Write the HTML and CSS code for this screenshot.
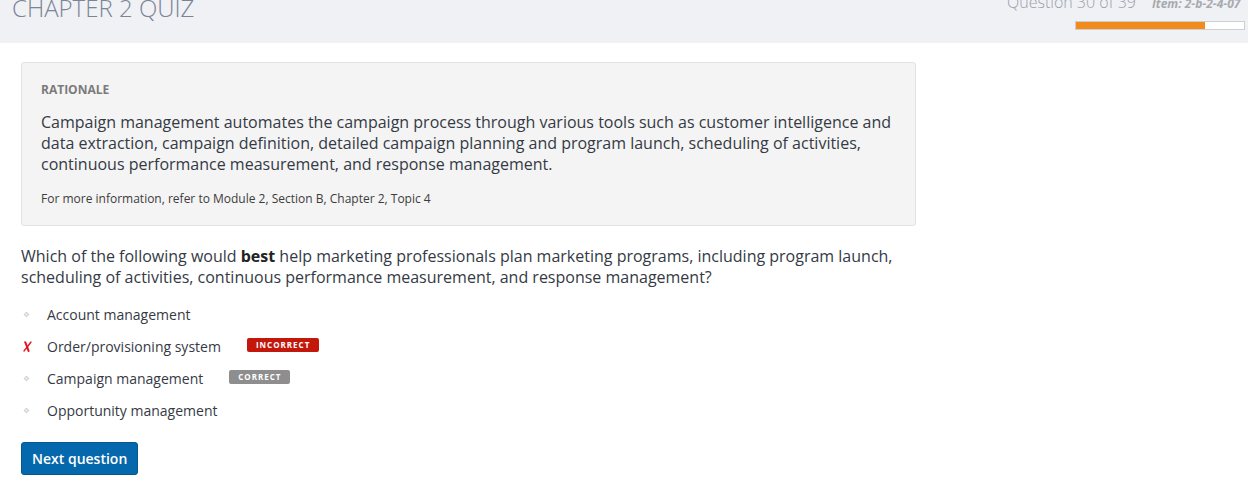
FILE: index.html
```html
<!DOCTYPE html>
<html lang="en">
<head>
<meta charset="utf-8">
<title>Chapter 2 Quiz</title>
<link rel="stylesheet" href="styles.css">
</head>
<body>
<header class="topbar">
  <h1 class="title">CHAPTER 2 QUIZ</h1>
  <div class="status">
    <div class="status-row">
      <span class="counter">Question 30 of 39</span>
      <span class="item-id">Item: 2-b-2-4-07</span>
    </div>
    <div class="progress"><div class="progress-fill" style="width: 76.9%"></div></div>
  </div>
</header>
<main class="content">
  <section class="rationale">
    <h2 class="rationale-label">RATIONALE</h2>
    <p class="rationale-text">Campaign management automates the campaign process through various tools such as customer intelligence and data extraction, campaign definition, detailed campaign planning and program launch, scheduling of activities, continuous performance measurement, and response management.</p>
    <p class="rationale-ref">For more information, refer to Module 2, Section B, Chapter 2, Topic 4</p>
  </section>
  <p class="question">Which of the following would <strong>best</strong> help marketing professionals plan marketing programs, including program launch, scheduling of activities, continuous performance measurement, and response management?</p>
  <ul class="options">
    <li class="option">
      <span class="marker"><svg width="7" height="7" viewBox="0 0 7 7"><path d="M3.5 0.5 L6.5 3.5 L3.5 6.5 L0.5 3.5 Z" fill="#d4d4d4"/><circle cx="3.5" cy="3.5" r="1.1" fill="#f2f2f2"/></svg></span>
      <span class="option-text">Account management</span>
    </li>
    <li class="option">
      <span class="marker"><svg width="9" height="11" viewBox="0 0 9 11"><path d="M2.2 1.2 C3.4 3.8 4.4 6.8 5.6 10" stroke="#e3121c" stroke-width="2" fill="none" stroke-linecap="round"/><path d="M8 1 C6 3.8 3.6 7 1 10" stroke="#e3121c" stroke-width="1.3" fill="none" stroke-linecap="round"/></svg></span>
      <span class="option-text">Order/provisioning system</span>
      <span class="badge badge-incorrect">INCORRECT</span>
    </li>
    <li class="option">
      <span class="marker"><svg width="7" height="7" viewBox="0 0 7 7"><path d="M3.5 0.5 L6.5 3.5 L3.5 6.5 L0.5 3.5 Z" fill="#d4d4d4"/><circle cx="3.5" cy="3.5" r="1.1" fill="#f2f2f2"/></svg></span>
      <span class="option-text">Campaign management</span>
      <span class="badge badge-correct">CORRECT</span>
    </li>
    <li class="option">
      <span class="marker"><svg width="7" height="7" viewBox="0 0 7 7"><path d="M3.5 0.5 L6.5 3.5 L3.5 6.5 L0.5 3.5 Z" fill="#d4d4d4"/><circle cx="3.5" cy="3.5" r="1.1" fill="#f2f2f2"/></svg></span>
      <span class="option-text">Opportunity management</span>
    </li>
  </ul>
  <button class="next-btn" type="button">Next question</button>
</main>
</body>
</html>
```

FILE: styles.css
```css
* { box-sizing: border-box; }

html, body {
  margin: 0;
  padding: 0;
  background: #ffffff;
  overflow: hidden;
}

body {
  font-family: "Open Sans", "Liberation Sans", sans-serif;
  color: #333333;
  width: 1248px;
  height: 477px;
}

.topbar {
  display: flex;
  justify-content: space-between;
  align-items: flex-start;
  height: 43px;
  background: #eff1f5;
  padding-left: 12px;
}

.title {
  margin: -7px 0 0 0;
  font-size: 24px;
  line-height: 30px;
  font-weight: 300;
  color: #7a8494;
  letter-spacing: 0;
}

.status {
  width: 241px;
  display: flex;
  flex-direction: column;
  align-items: flex-end;
}

.status-row {
  width: 100%;
  display: flex;
  align-items: baseline;
  gap: 16px;
  white-space: nowrap;
  margin-top: -8px;
  height: 20px;
}

.counter {
  font-size: 16px;
  line-height: 20px;
  font-weight: 300;
  color: #9aa0a8;
}

.item-id {
  font-size: 12px;
  font-weight: 700;
  font-style: italic;
  color: #a7aaaf;
}

.progress {
  width: 170px;
  height: 9px;
  margin-top: 9px;
  margin-right: 3px;
  border: 1px solid #cfcfcf;
  background: #ffffff;
}

.progress-fill {
  height: 100%;
  background: #f28b1e;
}

.content {
  padding: 19px 21px 0 21px;
  width: 937px;
}

.rationale {
  border: 1px solid #e2e2e2;
  border-radius: 3px;
  background: #f4f4f4;
  padding: 19px 19px 18px 19px;
}

.rationale-label {
  margin: 0;
  font-size: 12px;
  line-height: 16px;
  font-weight: 700;
  color: #7b7b7b;
}

.rationale-text {
  margin: 14px 0 0 0;
  font-size: 16px;
  line-height: 21px;
  color: #353a45;
}

.rationale-ref {
  margin: 16px 0 0 0;
  font-size: 12px;
  line-height: 16px;
  color: #3c3c3c;
}

.question {
  margin: 20px 0 0 0;
  font-size: 16px;
  line-height: 21px;
  color: #353a45;
}

.question strong {
  font-weight: 700;
  color: #222;
}

.options {
  list-style: none;
  margin: 10px 0 0 0;
  padding: 0;
}

.option {
  display: flex;
  align-items: center;
  height: 32px;
  font-size: 14px;
  color: #353a45;
}

.marker {
  width: 26px;
  display: flex;
  align-items: center;
  padding-left: 2px;
}

.badge {
  margin-left: 26px;
  height: 14px;
  margin-top: -2px;
  padding: 0 9px;
  border-radius: 2px;
  font-size: 8px;
  line-height: 14px;
  font-weight: 700;
  letter-spacing: 1px;
  color: #ffffff;
}

.badge-incorrect { background: #c4170c; }
.badge-correct { background: #8e8e8e; }

.next-btn {
  margin-top: 16px;
  height: 33px;
  padding: 0 10px;
  border: 1px solid #04578f;
  border-radius: 3px;
  background: #0567ac;
  color: #ffffff;
  font-family: "Open Sans", "Liberation Sans", sans-serif;
  font-size: 14px;
  font-weight: 600;
}
```
